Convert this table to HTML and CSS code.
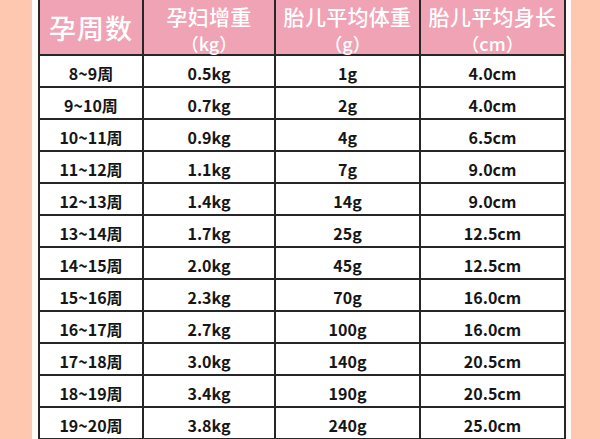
FILE: index.html
```html
<!DOCTYPE html>
<html lang="zh">
<head>
<meta charset="utf-8">
<link rel="stylesheet" href="styles.css">
</head>
<body>
<div class="page">
  <div class="sheet">
    <div class="grid">
      <div class="hd hd-big">孕周数</div>
      <div class="hd"><span class="l1">孕妇增重</span><span class="l2">（kg）</span></div>
      <div class="hd"><span class="l1">胎儿平均体重</span><span class="l2">（g）</span></div>
      <div class="hd"><span class="l1">胎儿平均身长</span><span class="l2">（cm）</span></div>

      <div class="td">8~9周</div><div class="td">0.5kg</div><div class="td">1g</div><div class="td">4.0cm</div>
      <div class="td">9~10周</div><div class="td">0.7kg</div><div class="td">2g</div><div class="td">4.0cm</div>
      <div class="td">10~11周</div><div class="td">0.9kg</div><div class="td">4g</div><div class="td">6.5cm</div>
      <div class="td">11~12周</div><div class="td">1.1kg</div><div class="td">7g</div><div class="td">9.0cm</div>
      <div class="td">12~13周</div><div class="td">1.4kg</div><div class="td">14g</div><div class="td">9.0cm</div>
      <div class="td">13~14周</div><div class="td">1.7kg</div><div class="td">25g</div><div class="td">12.5cm</div>
      <div class="td">14~15周</div><div class="td">2.0kg</div><div class="td">45g</div><div class="td">12.5cm</div>
      <div class="td">15~16周</div><div class="td">2.3kg</div><div class="td">70g</div><div class="td">16.0cm</div>
      <div class="td">16~17周</div><div class="td">2.7kg</div><div class="td">100g</div><div class="td">16.0cm</div>
      <div class="td">17~18周</div><div class="td">3.0kg</div><div class="td">140g</div><div class="td">20.5cm</div>
      <div class="td">18~19周</div><div class="td">3.4kg</div><div class="td">190g</div><div class="td">20.5cm</div>
      <div class="td">19~20周</div><div class="td">3.8kg</div><div class="td">240g</div><div class="td">25.0cm</div>
    </div>
  </div>
</div>
</body>
</html>
```
FILE: styles.css
```css
html, body {
  margin: 0;
  padding: 0;
}
body {
  background: #fdc8af;
  width: 600px;
  height: 439px;
  overflow: hidden;
  font-family: "Noto Sans CJK SC", "Noto Sans", sans-serif;
}
.page {
  display: flex;
  padding-left: 32px;
}
.sheet {
  width: 539px;
  height: 439px;
  background: #fffbfa;
  padding-left: 6px;
  box-sizing: border-box;
  overflow: hidden;
}
.grid {
  display: grid;
  width: 528px;
  grid-template-columns: 102px 130px 143px 143px;
  grid-template-rows: 54px;
  grid-auto-rows: 30px;
  gap: 2px;
  padding: 0 2px 2px 2px;
  box-sizing: border-box;
  background: #262626;
}
.hd {
  background: #f0a3b4;
  color: #ffffff;
  font-weight: 500;
  display: flex;
  flex-direction: column;
  align-items: center;
  justify-content: flex-start;
  text-align: center;
}
.hd .l1 {
  font-size: 21px;
  line-height: 28px;
  margin-top: 2px;
  letter-spacing: 0.3px;
}
.hd .l2 {
  font-size: 18px;
  line-height: 26px;
}
.hd-big {
  font-size: 27px;
  justify-content: center;
  line-height: 54px;
  letter-spacing: 1px;
  padding-top: 2px;
  box-sizing: border-box;
}
.td {
  background: #ffffff;
  color: #161616;
  font-weight: 700;
  font-size: 16px;
  line-height: 30px;
  text-align: center;
  padding-top: 2px;
  box-sizing: border-box;
}
```
